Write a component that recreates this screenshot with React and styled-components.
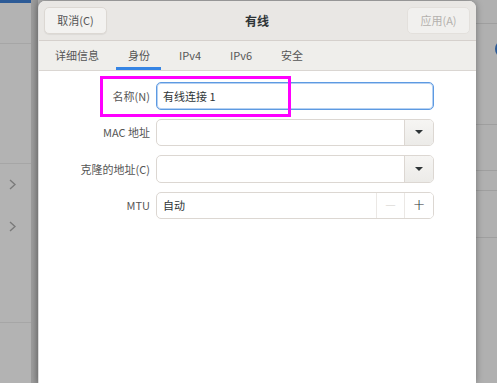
import React from "react";
import styled, { createGlobalStyle } from "styled-components";

const GlobalStyle = createGlobalStyle`
  html, body {
    margin: 0;
    padding: 0;
    background: #b2b2b2;
    overflow: hidden;
  }
  * {
    box-sizing: border-box;
  }
`;

const FONT = `"Noto Sans CJK SC", "Noto Sans", sans-serif`;

const Screen = styled.div`
  position: relative;
  display: flex;
  width: 497px;
  height: 383px;
  font-family: ${FONT};
  background: #b2b2b2;
  overflow: hidden;
`;

const Sidebar = styled.div`
  width: 32px;
  flex: none;
  display: flex;
  flex-direction: column;
  border-right: 1px solid #9c9c9c;
  background: #b3b3b3;
`;

const SideRow = styled.div`
  height: ${(p) => p.h}px;
  flex: none;
  display: flex;
  flex-direction: column;
  align-items: flex-start;
  padding-left: 9px;
  padding-top: ${(p) => p.pt || 0}px;
  gap: 31px;
  border-bottom: ${(p) => (p.line ? "1px solid #a6a6a6" : "none")};
  border-top: ${(p) => (p.accent ? "3px solid #2d5b97" : "none")};
`;

const Chevron = styled.svg`
  width: 7px;
  height: 11px;
`;

const Gutter = styled.div`
  width: 6px;
  flex: none;
  background: linear-gradient(to right, #9d9d9d, #8f8f8f);
`;

const Dialog = styled.div`
  width: 438px;
  flex: none;
  margin-top: 1px;
  display: flex;
  flex-direction: column;
  background: #ffffff;
  border-left: 1px solid #dcdcdc;
  border-radius: 7px 7px 0 0;
  box-shadow: 0 0 7px rgba(0, 0, 0, 0.35);
  overflow: hidden;
  z-index: 1;
`;

const HeaderBar = styled.div`
  height: 40px;
  flex: none;
  display: flex;
  align-items: center;
  justify-content: space-between;
  padding: 0 6px 1px 5px;
  background: #e9e7e4;
  border-bottom: 1px solid #d5d0cc;
`;

const HeaderButton = styled.div`
  width: 63px;
  height: 27px;
  display: flex;
  align-items: center;
  justify-content: center;
  font-size: 11px;
  color: ${(p) => (p.disabled ? "#b4b1ad" : "#555555")};
  background: ${(p) => (p.disabled ? "#f1f0ee" : "#f3f2f0")};
  border: 1px solid ${(p) => (p.disabled ? "#e3e0dc" : "#dcd8d3")};
  border-radius: 5px;
  box-shadow: ${(p) => (p.disabled ? "none" : "0 1px 1px rgba(0,0,0,0.06)")};
`;

const Title = styled.div`
  font-size: 12px;
  font-weight: 700;
  color: #2e3436;
`;

const TabBar = styled.div`
  height: 30px;
  flex: none;
  display: flex;
  align-items: stretch;
  padding-left: 4px;
  gap: 6px;
  background: #efeeeb;
  border-bottom: 1px solid #dad6d2;
`;

const Tab = styled.div`
  display: flex;
  align-items: center;
  padding: 2px 11px 0 12px;
  font-size: 11px;
  color: #555555;
  border-bottom: 3px solid ${(p) => (p.active ? "#3584e4" : "transparent")};
`;

const Content = styled.div`
  flex: 1;
  display: grid;
  grid-template-columns: 111px 278px;
  grid-auto-rows: 27.5px;
  column-gap: 6px;
  row-gap: 9px;
  align-content: start;
  padding-top: 11px;
`;

const Label = styled.div`
  display: flex;
  align-items: center;
  justify-content: flex-end;
  font-size: 11px;
  color: #555555;
  white-space: nowrap;
`;

const Field = styled.div`
  display: flex;
  align-items: stretch;
  background: #ffffff;
  border: 1px solid ${(p) => (p.focused ? "#5d9ae2" : "#dcd7d2")};
  box-shadow: ${(p) =>
    p.focused ? "inset 0 0 0 1px rgba(93,154,226,0.45)" : "none"};
  border-radius: 5px;
  overflow: hidden;
`;

const FieldText = styled.div`
  flex: 1;
  display: flex;
  align-items: center;
  padding-left: 6px;
  font-size: 11px;
  color: #2e3436;
`;

const DropButton = styled.div`
  width: 29px;
  flex: none;
  display: flex;
  align-items: center;
  justify-content: center;
  background: linear-gradient(#f6f5f3, #ecebe8);
  border-left: 1px solid #dcd7d2;
`;

const SpinButton = styled.div`
  width: ${(p) => p.w}px;
  flex: none;
  display: flex;
  align-items: center;
  justify-content: center;
  font-size: 15px;
  font-family: "DejaVu Sans", sans-serif;
  font-weight: 300;
  color: ${(p) => (p.disabled ? "#d0cdc9" : "#2e3436")};
  background: #ffffff;
  border-left: 1px solid #ebe8e5;
`;

const RightPanel = styled.div`
  flex: 1;
  display: flex;
  flex-direction: column;
  background: #b0b0b0;
`;

const RightRow = styled.div`
  height: ${(p) => p.h}px;
  flex: none;
  display: flex;
  align-items: flex-start;
  padding-top: ${(p) => p.pt || 0}px;
  padding-left: 19px;
  border-bottom: ${(p) => (p.line ? "1px solid #9f9f9f" : "none")};
`;

const SwitchEdge = styled.div`
  width: 18px;
  height: 18px;
  flex: none;
  border-radius: 9px;
  background: #2b5a96;
`;

const Highlight = styled.div`
  position: absolute;
  left: 100px;
  top: 76px;
  width: 191px;
  height: 41px;
  border: 3px solid #ff00ff;
  z-index: 2;
  pointer-events: none;
`;

const Arrow = () => (
  <svg width="8" height="4" viewBox="0 0 8 4">
    <path d="M0 0 H8 L4 4 Z" fill="#2e3436" />
  </svg>
);

const ChevronIcon = () => (
  <Chevron viewBox="0 0 7 11">
    <path d="M1 1 L6 5.5 L1 10" fill="none" stroke="#7a7a7a" strokeWidth="1.4" />
  </Chevron>
);

const tabs = ["详细信息", "身份", "IPv4", "IPv6", "安全"];

export default function App() {
  return (
    <Screen>
      <GlobalStyle />
      <Sidebar>
        <SideRow h={44} line accent />
        <SideRow h={120} line />
        <SideRow h={159} line pt={15}>
          <ChevronIcon />
          <ChevronIcon />
        </SideRow>
        <SideRow h={60} />
      </Sidebar>
      <Gutter />
      <Dialog>
        <HeaderBar>
          <HeaderButton>取消(C)</HeaderButton>
          <Title>有线</Title>
          <HeaderButton disabled>应用(A)</HeaderButton>
        </HeaderBar>
        <TabBar>
          {tabs.map((t) => (
            <Tab key={t} active={t === "身份"}>
              {t}
            </Tab>
          ))}
        </TabBar>
        <Content>
          <Label>名称(N)</Label>
          <Field focused>
            <FieldText>有线连接 1</FieldText>
          </Field>

          <Label>MAC 地址</Label>
          <Field>
            <FieldText />
            <DropButton>
              <Arrow />
            </DropButton>
          </Field>

          <Label>克隆的地址(C)</Label>
          <Field>
            <FieldText />
            <DropButton>
              <Arrow />
            </DropButton>
          </Field>

          <Label>MTU</Label>
          <Field>
            <FieldText>自动</FieldText>
            <SpinButton w={28} disabled>
              −
            </SpinButton>
            <SpinButton w={29}>+</SpinButton>
          </Field>
        </Content>
      </Dialog>
      <RightPanel>
        <RightRow h={24} line />
        <RightRow h={101} line pt={16}>
          <SwitchEdge />
        </RightRow>
        <RightRow h={46} line />
        <RightRow h={20} line />
        <RightRow h={47} line />
        <RightRow h={145} />
      </RightPanel>
      <Highlight />
    </Screen>
  );
}
